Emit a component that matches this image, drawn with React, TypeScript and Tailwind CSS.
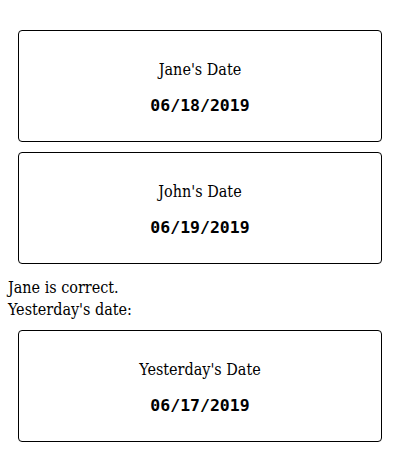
export default function App() {
  const Card = ({ title, date }: { title: string; date: string }) => (
    <div className="mx-[10px] box-border flex h-[112px] flex-col items-center rounded-[4px] border border-black pt-[29px]">
      <div className="text-[16px] leading-[20px]">{title}</div>
      <div className="mt-[16px] font-['DejaVu_Sans_Mono',monospace] text-[16.5px] font-bold leading-[20px]">
        {date}
      </div>
    </div>
  );
  return (
    <div className="min-h-[452px] bg-white px-[8px] pt-[30px] font-['DejaVu_Serif_Condensed','DejaVu_Serif',serif] text-black">
      <Card title="Jane's Date" date="06/18/2019" />
      <div className="h-[10px]" />
      <Card title="John's Date" date="06/19/2019" />
      <div className="mt-[13px] text-[16px] leading-[22px]">
        <div>Jane is correct.</div>
        <div>Yesterday's date:</div>
      </div>
      <div className="h-[9px]" />
      <Card title="Yesterday's Date" date="06/17/2019" />
    </div>
  );
}
